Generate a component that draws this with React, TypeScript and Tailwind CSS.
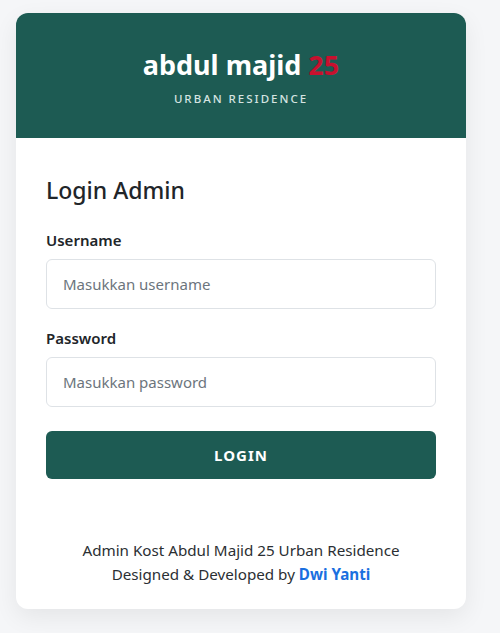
import { useState } from 'react';

export default function App() {
  const [username, setUsername] = useState('');
  const [password, setPassword] = useState('');

  return (
    <div className="min-h-[633px] bg-[#f5f6f8] pt-[13px] pl-4 font-['Noto_Sans',sans-serif] text-[#212529]">
      <div className="w-[450px] rounded-xl bg-white shadow-[0_8px_24px_rgba(0,0,0,0.07)] overflow-hidden">
        {/* Header */}
        <div className="h-[125px] bg-[#1d5b53] flex flex-col items-center pt-[34px]">
          <h1 className="text-[27px] leading-[36px] font-bold text-white">
            abdul majid <span className="text-[#c8102e]">25</span>
          </h1>
          <p className="mt-[9px] text-[11.5px] leading-[14px] tracking-[2px] text-[#d5e4e1] font-medium">
            URBAN RESIDENCE
          </p>
        </div>

        <div className="px-[30px] pt-[36px] pb-[23px]">
          <h2 className="text-[23px] leading-[32px] font-medium">Login Admin</h2>

          <label className="block mt-[24px] mb-[9px] text-[15px] leading-[20px] font-semibold">Username</label>
          <input
            type="text"
            placeholder="Masukkan username"
            value={username}
            onChange={(e) => setUsername(e.target.value)}
            className="w-full h-[50px] px-4 border border-[#dee2e6] rounded-md text-[15px] placeholder:text-[#6c757d] focus:outline-none"
          />

          <label className="block mt-[19px] mb-[9px] text-[15px] leading-[20px] font-semibold">Password</label>
          <input
            type="password"
            placeholder="Masukkan password"
            value={password}
            onChange={(e) => setPassword(e.target.value)}
            className="w-full h-[50px] px-4 border border-[#dee2e6] rounded-md text-[15px] placeholder:text-[#6c757d] focus:outline-none"
          />

          <button className="mt-[24px] w-full h-[48px] rounded-md bg-[#1d5b53] text-white text-[15px] font-bold tracking-[1px]">
            LOGIN
          </button>

          <div className="mt-[59px] text-center text-[15.2px] leading-[24px] text-[#2b2f33]">
            <p>Admin Kost Abdul Majid 25 Urban Residence</p>
            <p>
              Designed &amp; Developed by <span className="font-bold text-[#1a6fe0]">Dwi Yanti</span>
            </p>
          </div>
        </div>
      </div>
    </div>
  );
}
